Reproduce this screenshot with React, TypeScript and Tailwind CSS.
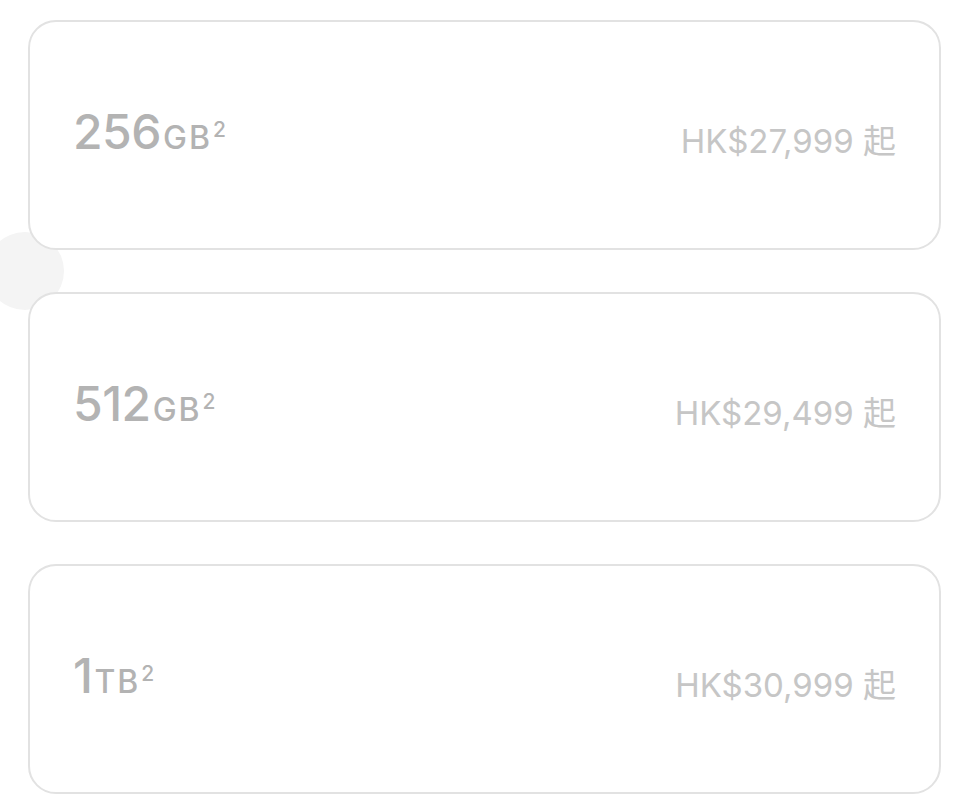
import React from 'react';

const options = [
  { size: '256', unit: 'GB', price: 'HK$27,999' },
  { size: '512', unit: 'GB', price: 'HK$29,499' },
  { size: '1', unit: 'TB', price: 'HK$30,999' },
];

export default function App() {
  return (
    <div
      className="relative min-h-[810px] w-[960px] bg-white overflow-hidden"
      style={{ fontFamily: 'Inter, "Noto Sans CJK TC", sans-serif' }}
    >
      {/* soft circle peeking from the left edge */}
      <div className="absolute left-[-14px] top-[232px] w-[78px] h-[78px] rounded-full bg-[#f4f4f4]" />

      <div className="relative flex flex-col gap-[42px] pt-[20px] pl-[28px] pr-[19px]">
        {options.map((o) => (
          <div
            key={o.size}
            className="flex items-center justify-between h-[230px] rounded-[28px] border-2 border-[#e2e2e2] bg-white px-[43px]"
          >
            <div className="text-[#b3b3b3] font-medium leading-none whitespace-nowrap -mt-[6px]">
              <span className="text-[48px] tracking-[-0.5px]">{o.size}</span>
              <span className="text-[32px] tracking-[2px] ml-[2px]">{o.unit}</span>
              <span className="text-[21px] align-[12px] ml-[1px]">2</span>
            </div>
            <div className="text-[33px] text-[#c6c6c6] leading-none mt-[12px]">
              {o.price} 起
            </div>
          </div>
        ))}
      </div>
    </div>
  );
}
